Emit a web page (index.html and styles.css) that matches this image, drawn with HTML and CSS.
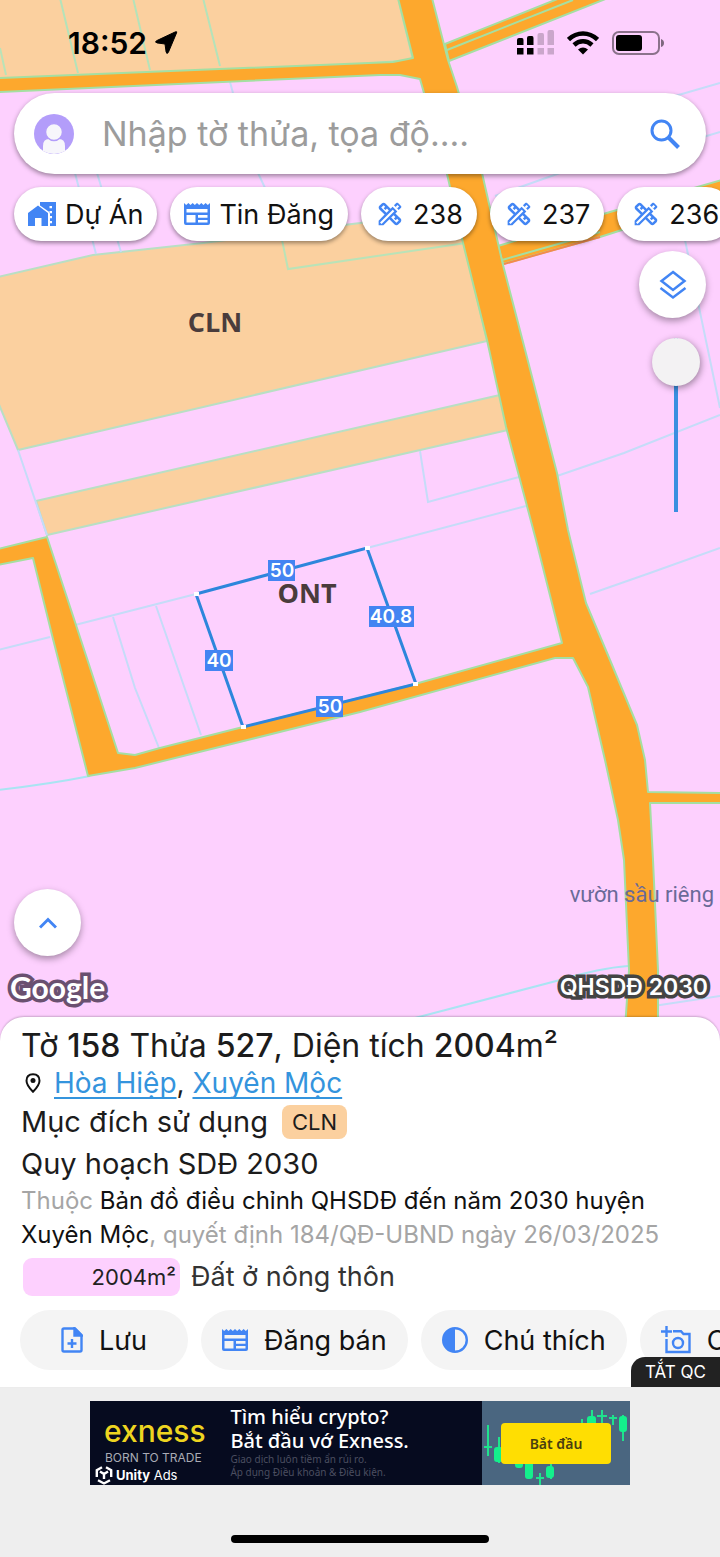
FILE: index.html
```html
<!DOCTYPE html>
<html lang="vi">
<head>
    <meta charset="UTF-8">
    <meta name="viewport" content="width=device-width, initial-scale=1.0">
    <title>Bản đồ quy hoạch</title>
    <link rel="stylesheet" href="styles.css">
</head>
<body>
    <!-- ICONS -->
    <svg class="defs" aria-hidden="true">
        <symbol id="i-tools" viewBox="2.500 2.500 19 19">
            <path fill="currentColor" d="M16.240 11.510l1.570-1.570-3.750-3.750-1.570 1.570-4.140-4.130c-.78-.78-2.050-.78-2.830 0l-1.900 1.900c-.78.78-.78 2.050 0 2.830l4.130 4.130L3 17.250V21h3.750l4.760-4.760 4.130 4.130c.95.95 2.230.6 2.830 0l1.900-1.900c.78-.78.78-2.050 0-2.830l-4.130-4.130zm-7.060-.44L5.040 6.940l1.890-1.900L8.200 6.310 7.020 7.500l1.410 1.410 1.190-1.190 1.450 1.450-1.890 1.900zm7.880 7.890l-4.130-4.130 1.900-1.900 1.450 1.450-1.190 1.190 1.410 1.410 1.190-1.190 1.270 1.270-1.900 1.900zm3.650-11.920c.39-.39.39-1.020 0-1.410l-2.340-2.340c-.47-.47-1.120-.29-1.410 0l-1.830 1.830 3.750 3.750 1.830-1.830z"/>
            <path d="M4.700 19.300 14.800 9.200M17 7 18.600 5.400" stroke="#fff" stroke-width="1.700"/>
        </symbol>
        <symbol id="i-news" viewBox="0 0 26 24">
            <path fill="currentColor" fill-rule="evenodd" d="M0 1l2.200 2 2.200-2 2.100 2 2.200-2 2.100 2L13 1l2.200 2 2.100-2 2.200 2 2.100-2 2.200 2L26 1v20q0 2-2 2H2q-2 0-2-2ZM2.500 7v3.500h21V7ZM2.500 13v7.500h9V13ZM14 13v2.700h9.500V13ZM14 18v2.500h9.500V18Z"/>
        </symbol>
    </svg>

    <!-- MAP -->
    <section class="map">
        <svg class="map-canvas" viewBox="0 0 720 1041" preserveAspectRatio="xMidYMin slice">
            <rect width="720" height="1041" fill="#fdd0fe"/>
            <g fill="#fbd09f" stroke="#b9dfc4" stroke-width="2">
                <path d="M-2-2H398L413 60 360 64-2 79Z"/>
                <path d="M-2 277 93 255 203 243 360 223 456 206 487 341 18 450-2 402Z"/>
                <path d="M36 501 500 395 508 430 47 535Z"/>
            </g>
            <g class="lots">
                <path d="M60-2 78 73M133-2 150 70M203-2 220 66" stroke="#b4e3ba"/>
                <path d="M0 48 6 75M281 235 288 269 466 243" stroke="#b9e3b8"/>
                <path d="M230 82 233 93M75 173 96 254M97 173 121 252M258 173 266 190"/>
                <path d="M18 450 47 535M-2 650 50 637M75 625 196 594M367 548 526 506M113 617 135 688 159 748M156 606 201 735"/>
                <path d="M420 451 428 502 519 477M557 476 624 453 720 415M590 594 650 573 720 548"/>
                <path d="M675 96 720 83M495 196 560 173M700 138 720 132M685 240 720 408"/>
                <path d="M640 1008 720 996"/>
                <path d="M-2 790Q50 784 90 776M415 1018 560 980Q600 968 628 966" stroke="#a9e4f2"/>
            </g>
            <g fill="#fda82d" stroke="#a5dfa2" stroke-width="2" stroke-linejoin="round">
                <path d="M445 44 560-2H608L449 61Z"/>
                <path d="M498 246 610 212 722 180V198L600 237 503 264Z"/>
                <path d="M398-2 413 58 393 62-2 78V92L380 75 400 75 420 79 447 174 463 243 487 340 506 427 536 540 562 643 415 684 243 727 160 748 135 755 118 753 75 622 47 537-2 549V565L33 558 52 635 88 776 135 768 360 712 555 658 573 658 588 687 605 760 618 820 624 860 629 970 624 1043H658V970L653 860 650 803 722 803V793L648 792 645 760 637 725 610 660 586 603 568 530 557 473 503 265 482 173 457 87 448 60 432-2Z"/>
                <path d="M447 50 573 0M502 260 600 232" fill="none"/>
            </g>
            <path d="M504 264 600 237" stroke="#f48a4c" stroke-width="2"/>
            <g class="zone">
                <text x="215" y="332">CLN</text>
                <text x="307" y="603">ONT</text>
            </g>
            <!-- selected lot and its side lengths -->
            <path d="M196 594 367 548 416 684 243 727Z" fill="none" stroke="#2d86dc" stroke-width="3"/>
            <g fill="#fff">
                <rect x="194" y="592" width="5" height="4"/>
                <rect x="365" y="546" width="5" height="4"/>
                <rect x="413" y="682" width="5" height="4"/>
                <rect x="241" y="725" width="5" height="4"/>
            </g>
            <g fill="#4384f2">
                <rect x="268" y="560" width="27" height="21"/>
                <rect x="369" y="606" width="45" height="21"/>
                <rect x="205" y="650" width="28" height="21"/>
                <rect x="316" y="696" width="27" height="21"/>
            </g>
            <g class="side">
                <text x="282" y="577">50</text>
                <text x="391" y="623">40.8</text>
                <text x="219" y="667">40</text>
                <text x="330" y="713">50</text>
            </g>
            <text class="place" x="714" y="902">vườn sầu riêng</text>
        </svg>

        <div class="status">
            <span class="time">18:52</span>
            <svg width="24" height="24" viewBox="0 0 24 24"><path d="M22.500 2 14.500 21q-1.500 3-2.400 0L11 13 3 11.900q-3-.9 0-2.400L21.500.8q2-.5 1 1.200Z" stroke="#000" stroke-linejoin="round"/></svg>
            <svg class="signal" width="37" height="26" viewBox="0 0 37 26">
                <path d="M0 10q0-2 2-2h3q1.500 0 1.500 2v5H0ZM10 8q0-2 2-2h3q1.500 0 1.500 2v7H10ZM0 18h6.500v6.500H0ZM10 18h6.500v6.500H10Z"/>
                <path opacity=".2" d="M20.500 5q0-2 2-2h3q1.500 0 1.500 2v10h-6.500ZM30.500 2q0-2 2-2h3q1.500 0 1.500 2v13h-6.500ZM20.500 18H27v6.500h-6.500ZM30.500 18H37v6.500h-6.500Z"/>
            </svg>
            <svg width="32" height="24" viewBox="0 0 32 24">
                <g fill="none" stroke="#000" stroke-width="4.500"><path d="M1.500 8.500Q8 2.500 16 2.500T30.500 8.500M7 14Q11 10.300 16 10.300T25 14"/></g>
                <path d="M11 18.500Q16 14.500 21 18.500L16 23.500Z"/>
            </svg>
            <svg width="52" height="24" viewBox="0 0 52 24">
                <rect x="1" y="1" width="46" height="22" rx="6" fill="none" stroke="#000" stroke-opacity=".45" stroke-width="2"/>
                <rect x="4" y="4" width="26" height="16" rx="3"/>
                <path d="M49 8q3 1 3 4t-3 4Z" opacity=".5"/>
            </svg>
        </div>

        <form class="search">
            <svg width="40" height="40" viewBox="0 0 40 40">
                <circle cx="20" cy="20" r="20" fill="#b39dfa"/>
                <path d="M9 37V32q0-7 6-7h10q6 0 6 7v5q-11 6-22 0Z" fill="#f7f6fb"/>
                <circle cx="20" cy="18" r="8.500" fill="#f7f6fb" stroke="#b39dfa" stroke-width="1.500"/>
            </svg>
            <input type="text" aria-label="Tìm kiếm" placeholder="Nhập tờ thửa, tọa độ....">
            <button type="button" aria-label="Tìm">
                <svg width="30" height="30" viewBox="0 0 30 30" fill="none" stroke="#4285f4" stroke-width="3"><circle cx="11.500" cy="11.500" r="9.500"/><path d="M18 18 28.500 28.500" stroke-width="4"/></svg>
            </button>
        </form>

        <nav class="chips">
            <button type="button">
                <svg width="28" height="24" viewBox="0 0 28 24"><path fill="currentColor" fill-rule="evenodd" d="M12 0H28V24H22V10.500L12 3.500ZM21.500 4v2.300H24V4ZM21.500 9v2.300H24V9ZM24 14v2.300h-2V14ZM24 19v2.300h-2V19ZM10 3.500 20 11V24H13.500V16H7v8H0V11Z"/></svg>
                Dự Án
            </button>
            <button type="button"><svg width="26" height="24"><use href="#i-news"/></svg>Tin Đăng</button>
            <button type="button" class="plan"><svg width="24" height="24"><use href="#i-tools"/></svg>238</button>
            <button type="button" class="plan"><svg width="24" height="24"><use href="#i-tools"/></svg>237</button>
            <button type="button" class="plan"><svg width="24" height="24"><use href="#i-tools"/></svg>236</button>
        </nav>

        <div class="tools">
            <button type="button" class="fab" aria-label="Lớp bản đồ">
                <svg width="28" height="30" viewBox="0 0 28 30" fill="none" stroke="currentColor" stroke-width="2.500"><path d="M14 2 25.500 11 14 20 2.500 11Z"/><path d="M1.500 18 14 27.500 26.500 18"/></svg>
            </button>
            <input class="opacity" type="range" aria-label="Độ mờ" min="0" max="100" value="0">
        </div>

        <div class="map-foot">
            <button type="button" class="fab" aria-label="Mở rộng">
                <svg width="18" height="12" viewBox="0 0 18 12" fill="none" stroke="currentColor" stroke-width="3"><path d="M1 10.500 9 2.500 17 10.500"/></svg>
            </button>
            <div class="credits">
                <span class="google">Google</span>
                <span class="layer">QHSDĐ 2030</span>
            </div>
        </div>
    </section>

    <!-- LOT DETAILS -->
    <section class="sheet">
        <h1>Tờ <b>158</b> Thửa <b>527</b>, Diện tích <b>2004</b>m²</h1>
        <p class="address">
            <svg width="16" height="20" viewBox="0 0 16 20"><path d="M8 1.200q6.500 0 6.500 6.500 0 4.500-6.500 11-6.500-6.500-6.500-11 0-6.500 6.500-6.500Z" fill="none" stroke="#111" stroke-width="2"/><circle cx="8" cy="7.500" r="2.500" fill="#111"/></svg>
            <span><a href="#">Hòa Hiệp</a>, <a href="#">Xuyên Mộc</a></span>
        </p>
        <p class="row">Mục đích sử dụng <span class="tag">CLN</span></p>
        <h2>Quy hoạch SDĐ 2030</h2>
        <p class="decision">Thuộc <span>Bản đồ điều chỉnh QHSDĐ đến năm 2030 huyện Xuyên Mộc</span>, quyết định 184/QĐ-UBND ngày 26/03/2025</p>
        <p class="land"><span class="area">2004m²</span> Đất ở nông thôn</p>
        <div class="actions">
            <button type="button">
                <svg width="22" height="26" viewBox="0 0 22 26" fill="none" stroke="currentColor" stroke-width="2.400"><path d="M3 1.500H14L20.500 8V23q0 1.500-1.500 1.500H3Q1.500 24.500 1.500 23V3Q1.500 1.500 3 1.500ZM11 12v9M6.500 16.500h9"/><path d="M13.500 1.500V8.500H20.500Z" fill="currentColor"/></svg>
                Lưu
            </button>
            <button type="button"><svg width="26" height="24"><use href="#i-news"/></svg>Đăng bán</button>
            <button type="button">
                <svg width="26" height="26" viewBox="0 0 26 26"><circle cx="13" cy="13" r="11.800" fill="none" stroke="currentColor" stroke-width="2.400"/><path d="M13 1a12 12 0 0 0 0 24Z" fill="currentColor"/></svg>
                Chú thích
            </button>
            <button type="button">
                <svg width="30" height="28" viewBox="0 0 30 28" fill="none" stroke="currentColor" stroke-width="2.400"><path d="M5.500 0V11M0 5.500H11M12 5.200H20L22.500 8H28.500V26H5.500V13"/><circle cx="17" cy="17" r="5"/></svg>
                C
            </button>
        </div>
        <button type="button" class="ads-off">TẮT QC</button>
    </section>

    <!-- AD -->
    <footer class="ad-zone">
        <div class="ad">
            <div class="brand">
                <span class="exness">exness</span>
                <span class="motto">BORN TO TRADE</span>
                <span class="unity">
                    <svg width="18" height="20" viewBox="0 0 18 20" fill="none" stroke="#fff" stroke-width="2.400"><path d="M7 2.200 1.800 5.200V12M11 2.200 16.200 5.200V12M3 15.200 9 18.500 15 15.200M5 6.500 9 9 13 6.500M9 9V14"/></svg>
                    <span><b>Unity</b> Ads</span>
                </span>
            </div>
            <div class="pitch">
                <strong>Tìm hiểu crypto?<br>Bắt đầu vớ Exness.</strong>
                <small>Giao dịch luôn tiềm ẩn rủi ro.<br>Áp dụng Điều khoản &amp; Điều kiện.</small>
            </div>
            <div class="cta">
                <svg class="candles" viewBox="0 0 148 84" preserveAspectRatio="none">
                    <path d="M6 24V55M2 46H10M17 36V62M110 9V24M120 9V24M115 15H125M131 14V24M127 17H135M100 18V24M141 14V40M58 72V84M54 77H62M69 62V78" stroke="#1fe28d" stroke-width="2"/>
                    <g fill="#14f08c"><rect x="12" y="46" width="9" height="15" rx="3"/><rect x="105" y="15" width="9" height="11" rx="3"/><rect x="137" y="15" width="8" height="16" rx="3"/><rect x="33" y="58" width="8" height="9" rx="3"/><rect x="43" y="58" width="8" height="20" rx="3"/><rect x="64" y="65" width="8" height="12" rx="3"/></g>
                </svg>
                <button type="button">Bắt đầu</button>
            </div>
        </div>
        <div class="home"></div>
    </footer>
</body>
</html>
```

FILE: styles.css
```css
*{box-sizing: border-box;}

body{
    margin: 0;
    min-height: 100vh;
    display: flex;
    flex-direction: column;
    overflow-x: hidden;
    font-family: Inter, "Noto Sans", sans-serif;
    color: #1c1c1c;
    background: #eee;
}

h1, h2, p{
    margin: 0;
    font-weight: 400;
}

button{
    border: 0;
    padding: 0;
    font: inherit;
    color: #111;
    background: none;
    cursor: pointer;
}

svg{flex: none;}
button svg{color: #4285f4;}
.defs{display: none;}

/* MAP */
.map{
    position: relative;
    flex: 1;
    display: flex;
    flex-direction: column;
    padding-bottom: 30px;
    overflow: hidden;
}
.map-canvas{
    position: absolute;
    inset: 0;
    width: 100%;
    height: 100%;
}
.map > :not(.map-canvas){position: relative;}

.lots{
    fill: none;
    stroke: #c5dcf8;
    stroke-width: 2;
}
.zone{
    font: 700 27px "Open Sans", sans-serif;
    fill: #4a3c3c;
    text-anchor: middle;
}
.side{
    font: 600 19px Inter, sans-serif;
    fill: #fff;
    text-anchor: middle;
}
.place{
    font: 22px Roboto, sans-serif;
    fill: #6a6a98;
    text-anchor: end;
}

.status{
    display: flex;
    align-items: center;
    gap: 13px;
    height: 93px;
    padding: 0 56px 8px 68px;
}
.time{
    font-size: 30px;
    font-weight: 600;
    margin-right: -6px;
    color: #000;
}
.signal{margin-left: auto;}

.search{
    display: flex;
    align-items: center;
    gap: 28px;
    height: 81px;
    margin: 0 14px;
    padding: 0 26px 0 20px;
    border-radius: 41px;
    background: #fff;
    box-shadow: 0 2px 5px rgba(0,0,0,.4);
}
.search input{
    flex: 1;
    min-width: 0;
    border: 0;
    padding: 0;
    outline: 0;
    font: 34px Inter, "Noto Sans", sans-serif;
    background: none;
}
.search input::placeholder{color: #9c9c9c;}
.search button{display: flex;}

.chips{
    display: flex;
    gap: 13px;
    padding: 13px 0 10px 14px;
    overflow: hidden;
}
.chips button{
    flex: none;
    display: flex;
    align-items: center;
    gap: 9px;
    height: 54px;
    padding: 0 14px;
    border-radius: 27px;
    font-size: 27px;
    background: #fff;
    box-shadow: 0 2px 4px rgba(0,0,0,.4);
}
.chips .plan{
    gap: 11px;
    padding: 0 14px 0 17px;
}

.tools{
    display: flex;
    flex-direction: column;
    align-items: flex-end;
    gap: 20px;
    padding-right: 14px;
}
.fab{
    display: flex;
    align-items: center;
    justify-content: center;
    width: 67px;
    height: 67px;
    border-radius: 50%;
    background: #fff;
    box-shadow: 0 3px 7px rgba(0,0,0,.35);
}

.opacity{
    appearance: none;
    writing-mode: vertical-lr;
    width: 48px;
    height: 174px;
    margin: 0 6px 0 0;
    background: linear-gradient(#3a8fe0, #3a8fe0) center / 4px 100% no-repeat;
}
.opacity::-webkit-slider-thumb{
    appearance: none;
    width: 48px;
    height: 48px;
    border-radius: 50%;
    background: #f3f2f3;
    box-shadow: 1px 2px 7px rgba(0,0,0,.4);
}

.map-foot{
    margin-top: auto;
    padding: 0 12px 0 14px;
}
.credits{
    display: flex;
    justify-content: space-between;
    align-items: center;
    height: 48px;
    margin-top: 7px;
    line-height: 30px;
    color: #fff;
}
.google{
    margin-left: -4px;
    font-family: Lato, sans-serif;
    font-size: 30px;
    font-weight: 700;
    -webkit-text-stroke: 7px #6a5070;
    paint-order: stroke fill;
}
.layer{
    font-size: 23px;
    font-weight: 600;
    -webkit-text-stroke: 7px #444;
    paint-order: stroke fill;
}

/* LOT DETAILS */
.sheet{
    position: relative;
    margin-top: -24px;
    padding: 10px 0 17px 21px;
    border-radius: 24px 24px 0 0;
    background: #fff;
    box-shadow: 0 -1px 2px rgba(0,0,0,.2);
    overflow: hidden;
}
.sheet h1{
    font-size: 32px;
    line-height: 38px;
}
.sheet b{font-weight: 500;}
.address{
    display: flex;
    align-items: center;
    gap: 13px;
    padding-left: 4px;
    font-size: 28px;
    line-height: 36px;
}
.address a{
    color: #3494dd;
    text-decoration-thickness: 2px;
    text-underline-offset: 4px;
    text-decoration-skip-ink: none;
}
.row{
    display: flex;
    align-items: center;
    gap: 14px;
    font-size: 29px;
    line-height: 42px;
}
.tag{
    padding: 0 10px;
    border-radius: 8px;
    font-size: 22px;
    line-height: 34px;
    background: #fbd09f;
}
.sheet h2{
    font-size: 29px;
    line-height: 41px;
}
.decision{
    padding-right: 40px;
    font-size: 24px;
    line-height: 34px;
    color: #a5a5a5;
}
.decision span{color: #111;}
.land{
    display: flex;
    align-items: center;
    gap: 11px;
    margin: 6px 0 14px 2px;
    font-size: 27px;
    line-height: 38px;
    color: #333;
}
.area{
    width: 157px;
    padding-right: 4px;
    border-radius: 9px;
    font-size: 22px;
    text-align: right;
    color: #222;
    background: #fdd0fe;
}

.actions{
    display: flex;
    gap: 13px;
    margin-left: -1px;
}
.actions button{
    flex: none;
    display: flex;
    align-items: center;
    justify-content: center;
    gap: 16px;
    min-width: 168px;
    height: 60px;
    padding: 0 21px;
    border-radius: 30px;
    font-size: 27px;
    background: #f4f4f4;
}
.actions button:last-child{justify-content: flex-start;}
.ads-off{
    position: absolute;
    right: 0;
    bottom: 0;
    height: 30px;
    padding: 0 14px;
    border-radius: 14px 0 0 0;
    font-size: 17px;
    color: #fff;
    background: #222;
}

/* AD */
.ad-zone{
    display: flex;
    flex-direction: column;
    align-items: center;
    padding: 14px 0;
    background: #eee;
}
.ad{
    display: flex;
    width: 75%;
    height: 84px;
    background: #060b1f;
    color: #fff;
    font-family: "Noto Sans", sans-serif;
}
.brand{
    display: flex;
    flex-direction: column;
    width: 26%;
    padding: 14px 0 0 5px;
}
.exness{
    padding-left: 9px;
    font: 500 30px/32px Inter, sans-serif;
    color: #eed520;
}
.motto{
    padding: 4px 0 0 10px;
    font: 12px/14px Inter, sans-serif;
    color: #a9abb5;
}
.unity{
    display: flex;
    align-items: center;
    gap: 3px;
    font: 13px/18px Inter, sans-serif;
}
.pitch{
    flex: 1;
    padding-top: 4px;
    white-space: nowrap;
}
.pitch strong{
    display: block;
    font-size: 20px;
    font-weight: 500;
    line-height: 24px;
}
.pitch small{
    display: block;
    font-size: 10px;
    line-height: 13px;
    color: #4b4e60;
}
.cta{
    position: relative;
    display: flex;
    align-items: center;
    justify-content: center;
    width: 148px;
    background: #4a6680;
}
.candles{
    position: absolute;
    inset: 0;
    width: 100%;
    height: 100%;
}
.cta button{
    position: relative;
    width: 110px;
    height: 41px;
    border-radius: 4px;
    font-size: 14px;
    font-weight: 600;
    color: #4a3f10;
    background: #ffde02;
}
.home{
    width: 258px;
    height: 8px;
    margin-top: 50px;
    border-radius: 4px;
    background: #000;
}
```
